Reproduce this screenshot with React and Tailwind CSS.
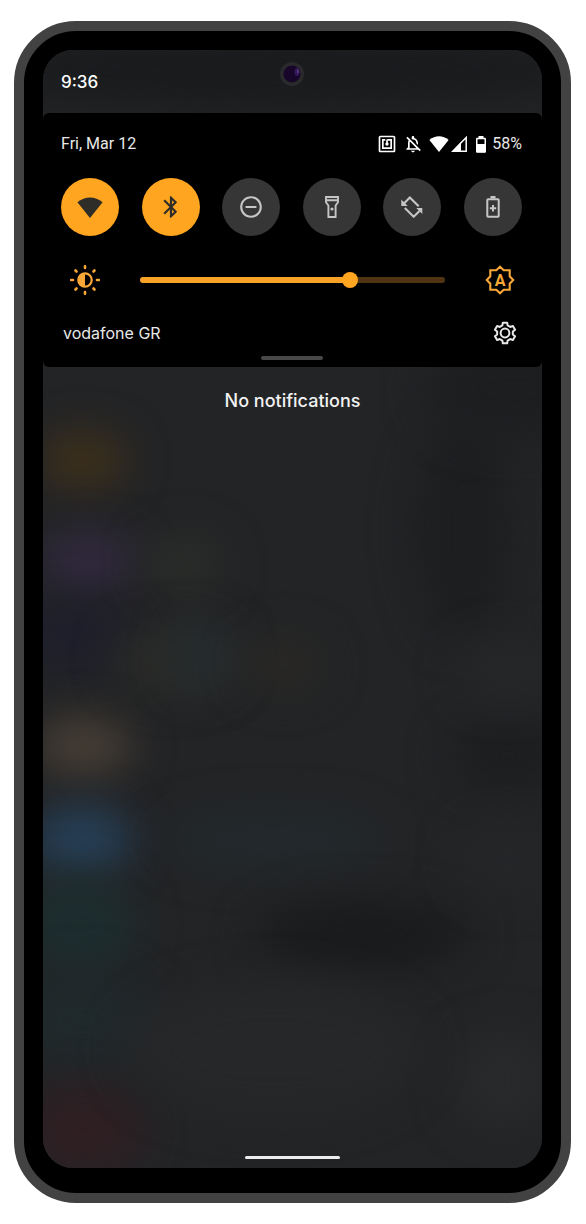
import { useState } from "react";
import {
  MdBluetooth,
  MdNfc,
  MdOutlineNotificationsOff,
  MdRemoveCircleOutline,
} from "react-icons/md";

function WifiFan({ className }) {
  return (
    <svg viewBox="0 0 26 21" className={className} fill="currentColor" aria-hidden="true">
      <path d="M13 21 0.4 5.2C8-1.2 18-1.2 25.600 5.200z" />
    </svg>
  );
}

function SignalIcon() {
  return (
    <svg viewBox="0 0 16 16" className="size-4" aria-hidden="true">
      <path d="M15.200 1.500v13.700H1.800z" fill="none" stroke="currentColor" strokeWidth="1.500" />
      <path d="M10 6v9.500H1.500z" fill="currentColor" />
    </svg>
  );
}

function BatteryIcon() {
  return (
    <svg viewBox="0 0 10 17" className="h-[17px] w-[10px]" aria-hidden="true">
      <path d="M2.500 0h5v2.500h-5z" fill="currentColor" />
      <rect x="0.750" y="2.500" width="8.500" height="13.500" rx="0.500" fill="none" stroke="currentColor" strokeWidth="1.500" />
      <path d="M0.500 8h9v8.300h-9z" fill="currentColor" />
    </svg>
  );
}

function FlashlightIcon() {
  return (
    <svg viewBox="0 0 14 22" className="h-[22px] w-[14px]" fill="none" stroke="currentColor" strokeWidth="1.900" aria-hidden="true">
      <path d="M1 1h12v5.200L10.600 9.500V21H3.400V9.500L1 6.200z" />
      <path d="M1 4.300h12" />
      <circle cx="7" cy="13" r="1.600" fill="currentColor" stroke="none" />
    </svg>
  );
}

function RotateIcon() {
  return (
    <svg viewBox="0 0 22 22" className="size-[22px]" fill="none" stroke="currentColor" strokeWidth="2.100" aria-hidden="true">
      <path d="M3 7.500 8.800 1.500l8.900 8.800" />
      <path d="M3.800 12l8.900 8.700 5.800-5.800" />
      <path d="M0.300 3.600v6.400h6.400zM15.300 12h6v6z" fill="currentColor" stroke="none" />
    </svg>
  );
}

function BatterySaverIcon() {
  return (
    <svg viewBox="0 0 14 22" className="h-[22px] w-[14px]" fill="none" stroke="currentColor" strokeWidth="2" aria-hidden="true">
      <path d="M4.500 0h5v2.500h-5z" fill="currentColor" stroke="none" />
      <rect x="1.300" y="3.200" width="11.400" height="17.600" rx="0.800" />
      <path d="M7 9v6.400M3.800 12.200h6.400" strokeWidth="2" />
    </svg>
  );
}

function BrightnessIcon() {
  return (
    <svg viewBox="-16 -16 32 32" className="size-8" fill="none" stroke="currentColor" strokeWidth="2.200" strokeLinecap="round" aria-hidden="true">
      <circle r="6.700" />
      <path d="M0-7a7 7 0 0 0 0 14z" fill="currentColor" stroke="none" />
      <path d="M0-12v-1.800M0 12v1.800M-12 0h-1.800M12 0h1.800M-8.500-8.500l-1-1M8.500-8.500l1-1M-8.500 8.500l-1 1M8.500 8.500l1 1" strokeWidth="2.600" />
    </svg>
  );
}

function AutoBrightnessIcon() {
  return (
    <svg viewBox="-16 -16 32 32" className="size-8" aria-hidden="true">
      <path
        d="M0-13.200 3.700-9.700H9.700V-3.700L13.200 0 9.700 3.700V9.700H3.700L0 13.200-3.700 9.700H-9.700V3.700L-13.200 0-9.700-3.700V-9.700H-3.700z"
        fill="none"
        stroke="currentColor"
        strokeWidth="2.100"
      />
      <text y="6" textAnchor="middle" fill="currentColor" className="font-[Roboto,sans-serif] text-[16px] font-bold">
        A
      </text>
    </svg>
  );
}

const gearPoints = Array.from({ length: 6 }, (_, tooth) =>
  [
    [-19, 8],
    [-12, 10.6],
    [12, 10.6],
    [19, 8],
  ].map(([offset, radius]) => {
    const angle = ((tooth * 60 - 90 + offset) * Math.PI) / 180;
    return `${(radius * Math.cos(angle)).toFixed(2)},${(radius * Math.sin(angle)).toFixed(2)}`;
  }),
)
  .flat()
  .join(" ");

function GearIcon() {
  return (
    <svg viewBox="-13 -13 26 26" className="size-[26px]" fill="none" stroke="currentColor" strokeWidth="2" strokeLinejoin="round" aria-hidden="true">
      <polygon points={gearPoints} />
      <circle r="4.400" />
    </svg>
  );
}

const glows = [
  { cx: 40, cy: 410, rx: 44, ry: 28, fill: "#3e301a" },
  { cx: 45, cy: 512, rx: 48, ry: 28, fill: "#332a42" },
  { cx: 30, cy: 585, rx: 60, ry: 38, fill: "#1e1f2b" },
  { cx: 40, cy: 696, rx: 50, ry: 30, fill: "#463e35" },
  { cx: 38, cy: 790, rx: 52, ry: 34, fill: "#264058" },
  { cx: 35, cy: 875, rx: 60, ry: 50, fill: "#1d2d2e" },
  { cx: 40, cy: 970, rx: 70, ry: 50, fill: "#20292b" },
  { cx: 40, cy: 1080, rx: 60, ry: 45, fill: "#2f1f23" },
  { cx: 140, cy: 515, rx: 40, ry: 30, fill: "#2a2c29" },
  { cx: 130, cy: 610, rx: 60, ry: 34, fill: "#2a2b28" },
  { cx: 160, cy: 605, rx: 32, ry: 34, fill: "#262c2f" },
  { cx: 240, cy: 615, rx: 40, ry: 28, fill: "#292825" },
  { cx: 230, cy: 790, rx: 110, ry: 30, fill: "#23292c" },
  { cx: 320, cy: 885, rx: 110, ry: 36, fill: "#1a1b1c" },
  { cx: 420, cy: 480, rx: 50, ry: 110, fill: "#1d1e20" },
  { cx: 470, cy: 340, rx: 90, ry: 50, fill: "#1d1e20" },
  { cx: 465, cy: 705, rx: 60, ry: 30, fill: "#1c1d1f" },
  { cx: 465, cy: 620, rx: 50, ry: 30, fill: "#262729" },
  { cx: 465, cy: 810, rx: 50, ry: 36, fill: "#252628" },
  { cx: 460, cy: 1030, rx: 50, ry: 50, fill: "#28292b" },
  { cx: 230, cy: 1000, rx: 150, ry: 70, fill: "#262729" },
  { cx: 240, cy: 20, rx: 320, ry: 40, fill: "#1a1b1d" },
];

function Wallpaper() {
  return (
    <svg
      viewBox="0 0 499 1118"
      preserveAspectRatio="none"
      className="absolute inset-0 size-full"
      aria-hidden="true"
    >
      <defs>
        <filter id="soften" x="-100%" y="-150%" width="300%" height="400%" colorInterpolationFilters="sRGB">
          <feGaussianBlur stdDeviation="20" />
        </filter>
      </defs>
      <rect width="499" height="1118" fill="#232426" />
      {glows.map((g) => (
        <ellipse key={`${g.cx}-${g.cy}`} {...g} filter="url(#soften)" />
      ))}
    </svg>
  );
}

function Camera() {
  return (
    <svg viewBox="-12 -12 24 24" className="size-6" aria-hidden="true">
      <circle r="12" fill="#2a2a2c" />
      <circle r="8.500" fill="#18062a" />
      <ellipse cx="5" cy="-2" rx="2.500" ry="4" fill="#34185a" />
      <ellipse cx="6" cy="-2.500" rx="1" ry="2" fill="#543a7a" />
    </svg>
  );
}

const tiles = [
  { name: "Wi-Fi", icon: <WifiFan className="h-[21px] w-[26px]" />, on: true },
  { name: "Bluetooth", icon: <MdBluetooth className="size-[26px]" />, on: true },
  { name: "Do Not Disturb", icon: <MdRemoveCircleOutline className="size-[26px]" />, on: false },
  { name: "Flashlight", icon: <FlashlightIcon />, on: false },
  { name: "Auto-rotate", icon: <RotateIcon />, on: false },
  { name: "Battery Saver", icon: <BatterySaverIcon />, on: false },
];

function QuickTile({ name, icon, on: initial }) {
  const [on, setOn] = useState(initial);
  return (
    <button
      type="button"
      aria-label={name}
      aria-pressed={on}
      onClick={() => setOn(!on)}
      className={`flex size-[58px] items-center justify-center rounded-full ${
        on ? "bg-[#ffa51f] text-[#2e2d28]" : "bg-[#363636] text-[#c6c6c6]"
      }`}
    >
      {icon}
    </button>
  );
}

function BrightnessSlider() {
  const [value, setValue] = useState(70);
  return (
    <input
      type="range"
      aria-label="Brightness"
      min="0"
      max="100"
      value={value}
      onChange={(e) => setValue(Number(e.target.value))}
      style={{ backgroundImage: `linear-gradient(to right, #f9a326 ${value}%, #4f3511 ${value}%)` }}
      className="h-[6px] min-w-0 flex-1 appearance-none rounded-full [&::-webkit-slider-thumb]:size-4 [&::-webkit-slider-thumb]:appearance-none [&::-webkit-slider-thumb]:rounded-full [&::-webkit-slider-thumb]:bg-[#ffa51f]"
    />
  );
}

function QuickSettings() {
  return (
    <section className="relative rounded-md bg-black pr-5 pb-[7px] pl-[18px] pt-[19px] text-[#e8e8e8]">
      <div className="flex h-6 items-center justify-between font-[Roboto,sans-serif] text-[16px]">
        <span>Fri, Mar 12</span>
        <div className="flex items-center text-white">
          <MdNfc className="mr-1.5 size-5" />
          <MdOutlineNotificationsOff className="mr-1.5 size-5" />
          <WifiFan className="mr-0.5 h-4 w-5" />
          <SignalIcon />
          <span className="mr-1.5 ml-[9px]">
            <BatteryIcon />
          </span>
          <span className="text-[#e8e8e8]">58%</span>
        </div>
      </div>

      <div className="mt-[22px] flex justify-between">
        {tiles.map((tile) => (
          <QuickTile key={tile.name} {...tile} />
        ))}
      </div>

      <div className="mt-7 flex h-8 items-center pr-1.5 pl-2 text-[#f9a838]">
        <BrightnessIcon />
        <div className="flex min-w-0 flex-1 px-[39px]">
          <BrightnessSlider />
        </div>
        <button type="button" aria-label="Automatic brightness">
          <AutoBrightnessIcon />
        </button>
      </div>

      <div className="mt-6 flex h-[26px] items-center justify-between pr-1 pl-[2px]">
        <span className="font-[Inter,sans-serif] text-[16px]">vodafone GR</span>
        <button type="button" aria-label="Settings">
          <GearIcon />
        </button>
      </div>

      <div className="mx-auto mt-[10px] h-1 w-[62px] rounded-full bg-[#484848]" />
    </section>
  );
}

export default function App() {
  return (
    <div className="flex min-h-screen bg-white py-[21px] pr-[15px] pl-[14px]">
      <div className="flex flex-1 rounded-[62px] border-[10px] border-[#424242] bg-black px-[19px] pt-[19px] pb-[25px]">
        <main className="relative isolate flex flex-1 flex-col overflow-hidden rounded-[30px] bg-[#232426]">
          <Wallpaper />
          <header className="relative grid h-[63px] grid-cols-3 items-center px-[18px]">
            <span className="pt-0.5 font-[Inter,sans-serif] text-[17px] font-medium text-white">9:36</span>
            <span className="mb-4 justify-self-center">
              <Camera />
            </span>
          </header>
          <QuickSettings />
          <p className="relative mt-5 text-center font-[Inter,sans-serif] text-[18px] leading-7 font-medium text-[#f2f2f2]">
            No notifications
          </p>
          <div className="relative mx-auto mt-auto mb-[9px] h-[3px] w-[95px] rounded-full bg-[#ececec]" />
        </main>
      </div>
    </div>
  );
}
